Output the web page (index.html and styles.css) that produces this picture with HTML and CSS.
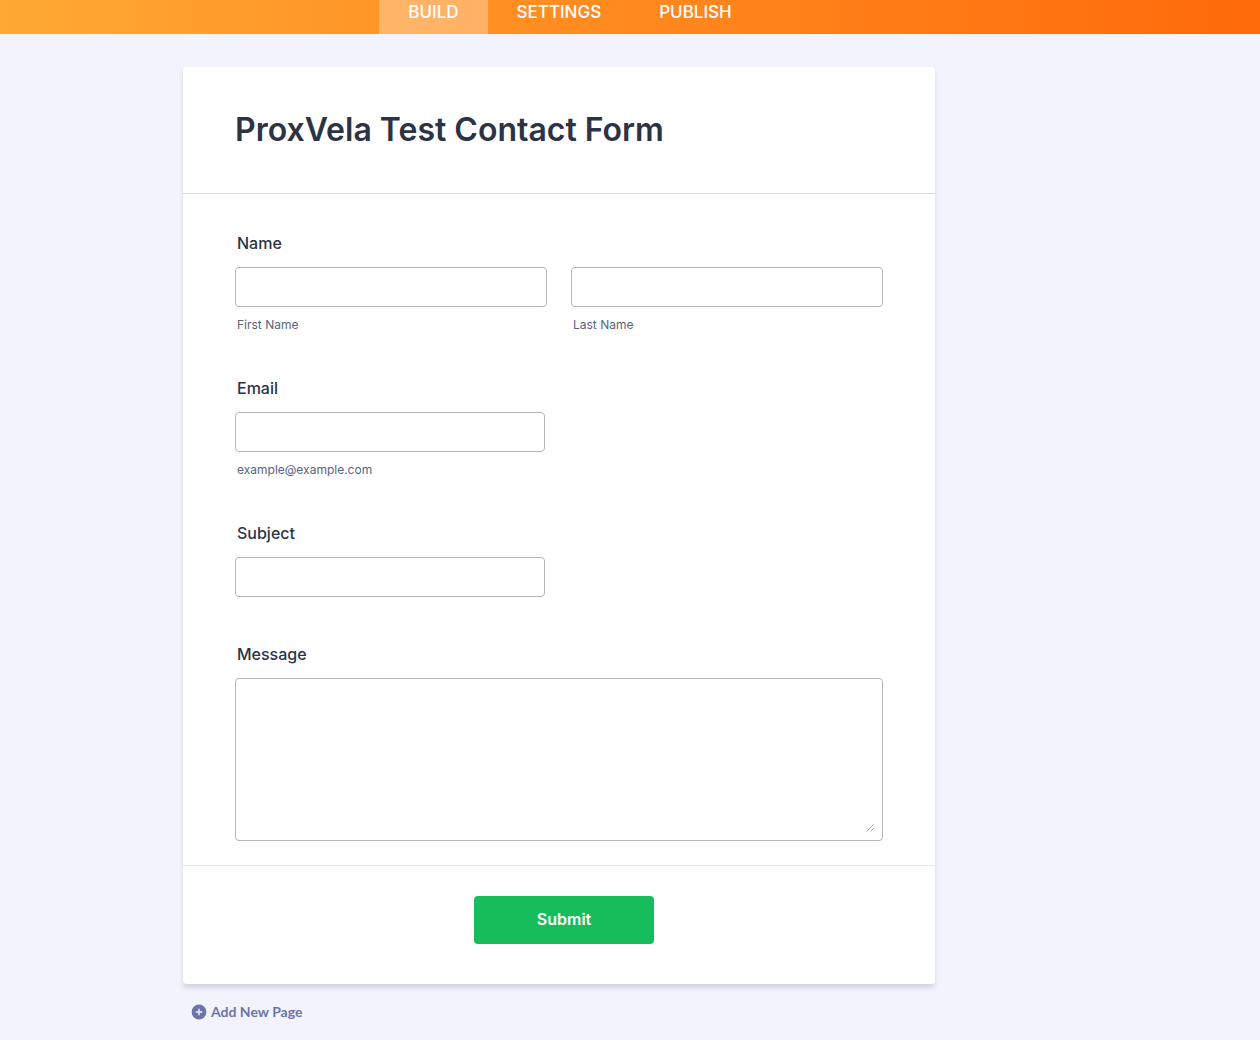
FILE: index.html
```html
<!DOCTYPE html>
<html lang="en">
<head>
    <meta charset="UTF-8">
    <meta name="viewport" content="width=device-width, initial-scale=1.0">
    <title>ProxVela Test Contact Form</title>
    <link rel="stylesheet" href="styles.css">
</head>
<body>
    <nav class="topbar">
        <a href="#build" class="tab active">BUILD</a>
        <a href="#settings" class="tab">SETTINGS</a>
        <a href="#publish" class="tab">PUBLISH</a>
    </nav>

    <main class="stage">
        <form class="card">
            <header class="card-header">
                <h1>ProxVela Test Contact Form</h1>
            </header>

            <div class="fields">
                <div class="field">
                    <label class="label" for="firstName">Name</label>
                    <div class="name-row">
                        <div>
                            <input type="text" id="firstName">
                            <label class="sublabel" for="firstName">First Name</label>
                        </div>
                        <div>
                            <input type="text" id="lastName">
                            <label class="sublabel" for="lastName">Last Name</label>
                        </div>
                    </div>
                </div>

                <div class="field">
                    <label class="label" for="email">Email</label>
                    <input type="email" id="email" class="short">
                    <label class="sublabel" for="email">example@example.com</label>
                </div>

                <div class="field">
                    <label class="label" for="subject">Subject</label>
                    <input type="text" id="subject" class="short">
                </div>

                <div class="field">
                    <label class="label" for="message">Message</label>
                    <div class="message-box">
                        <textarea id="message"></textarea>
                        <svg class="grip" width="8" height="8" viewBox="0 0 8 8" aria-hidden="true">
                            <path d="M0.5 7.5 L7.5 0.5 M4.5 7.5 L7.5 4.5" stroke="#a5a7ad" fill="none"/>
                        </svg>
                    </div>
                </div>
            </div>

            <div class="actions">
                <button type="button" class="submit">Submit</button>
            </div>
        </form>

        <button type="button" class="add-page">
            <svg width="16" height="16" viewBox="0 0 16 16" aria-hidden="true">
                <circle cx="8" cy="8" r="7.4" fill="#6c73a8"/>
                <path d="M8 5.2 V10.8 M5.2 8 H10.8" stroke="#f3f3fe" stroke-width="1.4" stroke-linecap="round"/>
            </svg>
            Add New Page
        </button>
    </main>
</body>
</html>
```

FILE: styles.css
```css
* { box-sizing: border-box; }
body { margin: 0; min-height: 100vh; font-family: Inter, "Liberation Sans", sans-serif; background-color: #f3f3fe; color: #2c3345; }

.topbar { display: flex; justify-content: center; padding-right: 120px; background: linear-gradient(90deg, #ffa834, #ff6a0a); }
.tab { padding: 0 29px 10px; font-size: 17px; line-height: 24px; font-weight: 500; color: #fff; text-decoration: none; }
.tab.active { background-color: rgba(255, 255, 255, 0.3); }

.stage { padding: 33px 142px 16px 0; }
.stage > * { max-width: 752px; margin-left: auto; margin-right: auto; }
.card { background-color: #fff; border-radius: 4px; box-shadow: 0 4px 4px rgba(87, 100, 126, 0.21); }
.card-header { padding: 42px 52px 43px; border-bottom: 1px solid #d7d8e1; }
h1 { margin: 0; font-size: 32px; line-height: 41px; font-weight: 600; }

.fields { padding: 39px 52px 24px; }
.field + .field { margin-top: 47px; }
.label { display: block; margin-bottom: 14px; padding-left: 2px; font-size: 16px; line-height: 20px; font-weight: 500; }
.sublabel { display: block; margin-top: 12px; padding-left: 2px; font-size: 12px; line-height: 12px; color: #57647e; }
.name-row { display: grid; grid-template-columns: 1fr 1fr; gap: 24px; }
input, textarea { display: block; width: 100%; border: 1px solid #b5b6ba; border-radius: 4px; background-color: #fff; font-family: inherit; font-size: 16px; color: inherit; }
input { height: 40px; padding: 0 10px; }
input.short { max-width: 310px; }
textarea { height: 163px; padding: 10px; resize: none; }
.message-box { position: relative; }
.grip { position: absolute; right: 9px; bottom: 9px; }

.actions { display: flex; justify-content: center; padding: 30px 0 40px 10px; border-top: 1px solid #e6e6ee; }
.submit { min-width: 180px; height: 48px; padding: 0 8px 2px; border: none; border-radius: 4px; background-color: #18bd5b; color: #fff; font-family: inherit; font-size: 16px; font-weight: 600; cursor: pointer; }
.submit:hover { background-color: #16aa52; }

.add-page { display: flex; align-items: center; gap: 4px; width: 100%; margin-top: 18px; padding: 0 8px; border: none; background: none; color: #6c73a8; font-family: Lato, Inter, sans-serif; font-size: 14px; line-height: 20px; font-weight: 700; cursor: pointer; }
```
